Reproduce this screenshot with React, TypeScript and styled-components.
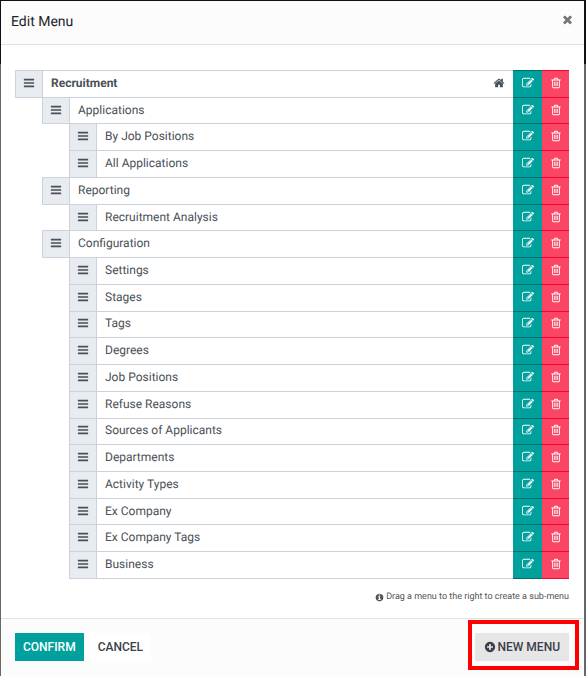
import React from "react";
import styled, { createGlobalStyle } from "styled-components";

const GlobalStyle = createGlobalStyle`
  *, *::before, *::after { box-sizing: border-box; }
  body {
    margin: 0;
    font-family: Roboto, "Liberation Sans", sans-serif;
    font-size: 12px;
    line-height: 16px;
    text-rendering: geometricPrecision;
    color: #495057;
    background: linear-gradient(#110f17 64px, #68686a 64px);
  }
  button { font: inherit; border-radius: 0; cursor: pointer; }
`;

const paths = {
  edit: "M888 1184l116-116-152-152-116 116v56h96v96h56zm440-720q-16-16-33 1l-350 350q-17 17-1 33t33-1l350-350q17-17 1-33zm80 594v190q0 119-84.5 203.5t-203.5 84.5h-832q-119 0-203.5-84.5t-84.5-203.5v-832q0-119 84.5-203.5t203.5-84.5h832q63 0 117 25 15 7 18 23 3 17-9 29l-49 49q-14 14-32 8-23-6-45-6h-832q-66 0-113 47t-47 113v832q0 66 47 113t113 47h832q66 0 113-47t47-113v-126q0-13 9-22l64-64q15-15 35-7t20 29zm-96-738l288 288-672 672h-288v-288zm444 132l-92 92-288-288 92-92q28-28 68-28t68 28l152 152q28 28 28 68t-28 68z",
  trash: "M704 736v576q0 14-9 23t-23 9h-64q-14 0-23-9t-9-23v-576q0-14 9-23t23-9h64q14 0 23 9t9 23zm256 0v576q0 14-9 23t-23 9h-64q-14 0-23-9t-9-23v-576q0-14 9-23t23-9h64q14 0 23 9t9 23zm256 0v576q0 14-9 23t-23 9h-64q-14 0-23-9t-9-23v-576q0-14 9-23t23-9h64q14 0 23 9t9 23zm128 724v-948h-896v948q0 22 7 40.5t14.5 27 10.5 8.5h832q3 0 10.5-8.5t14.5-27 7-40.5zm-672-1076h448l-48-117q-7-9-17-11h-317q-10 2-17 11zm928 32v64q0 14-9 23t-23 9h-96v948q0 83-47 143.5t-113 60.5h-832q-66 0-113-58.5t-47-141.5v-952h-96q-14 0-23-9t-9-23v-64q0-14 9-23t23-9h309l70-167q15-37 54-63t79-26h320q40 0 79 26t54 63l70 167h309q14 0 23 9t9 23z",
  home: "M1472 992v480q0 26-19 45t-45 19h-384v-384h-256v384h-384q-26 0-45-19t-19-45v-480q0-1 .5-3t.5-3l575-474 575 474q1 2 1 6zm223-69l-62 74q-8 9-21 11h-3q-13 0-21-7l-692-577-692 577q-12 8-24 7-13-2-21-11l-62-74q-8-10-7-23.5t11-21.5l719-599q32-26 76-26t76 26l244 204v-195q0-14 9-23t23-9h192q14 0 23 9t9 23v408l219 182q10 8 11 21.5t-7 23.5z",
  plus: "M1344 960v-128q0-26-19-45t-45-19h-256v-256q0-26-19-45t-45-19h-128q-26 0-45 19t-19 45v256h-256q-26 0-45 19t-19 45v128q0 26 19 45t45 19h256v256q0 26 19 45t45 19h128q26 0 45-19t19-45v-256h256q26 0 45-19t19-45zm320-64q0 209-103 385.5t-279.5 279.5-385.5 103-385.5-103-279.5-279.5-103-385.5 103-385.5 279.5-279.5 385.5-103 385.5 103 279.5 279.5 103 385.5z",
  info: "M1152 1376v-160q0-14-9-23t-23-9h-96v-512q0-14-9-23t-23-9h-320q-14 0-23 9t-9 23v160q0 14 9 23t23 9h96v320h-96q-14 0-23 9t-9 23v160q0 14 9 23t23 9h448q14 0 23-9t9-23zm-128-896v-160q0-14-9-23t-23-9h-192q-14 0-23 9t-9 23v160q0 14 9 23t23 9h192q14 0 23-9t9-23zm640 416q0 209-103 385.5t-279.5 279.5-385.5 103-385.5-103-279.5-279.5-103-385.5 103-385.5 279.5-279.5 385.5-103 385.5 103 279.5 279.5 103 385.5z",
  close: "M1490 1322q0 40-28 68l-136 136q-28 28-68 28t-68-28l-294-294-294 294q-28 28-68 28t-68-28l-136-136q-28-28-28-68t28-68l294-294-294-294q-28-28-28-68t28-68l136-136q28-28 68-28t68 28l294 294 294-294q28-28 68-28t68 28l136 136q28 28 28 68t-28 68l-294 294 294 294q28 28 28 68z",
  bars: "M1664 1344v128q0 26-19 45t-45 19h-1408q-26 0-45-19t-19-45v-128q0-26 19-45t45-19h1408q26 0 45 19t19 45zm0-512v128q0 26-19 45t-45 19h-1408q-26 0-45-19t-19-45v-128q0-26 19-45t45-19h1408q26 0 45 19t19 45zm0-512v128q0 26-19 45t-45 19h-1408q-26 0-45-19t-19-45v-128q0-26 19-45t45-19h1408q26 0 45 19t19 45z",
};

const Svg = styled.svg<{ $size: number }>`
  display: block;
  flex: none;
  width: ${(p) => p.$size}px;
  height: ${(p) => p.$size}px;
  fill: currentColor;
`;

function Icon({ name, size = 12 }: { name: keyof typeof paths; size?: number }) {
  return (
    <Svg $size={size} viewBox="0 0 1792 1792" aria-hidden="true">
      <path d={paths[name]} />
    </Svg>
  );
}

const Dialog = styled.section`
  display: flex;
  flex-direction: column;
  min-height: calc(100vh - 1px);
  margin: 1px 2px 0 1px;
  background: #fff;
`;

const Header = styled.header`
  display: flex;
  justify-content: space-between;
  align-items: flex-start;
  padding: 11px 10px 12px;
  background: #fcfcfc;
  border-bottom: 1px solid #dee2e6;
`;

const Title = styled.h1`
  margin: 0;
  font-size: 14px;
  line-height: 20px;
  font-weight: 400;
  color: #212529;
`;

const CloseButton = styled.button`
  padding: 1px 0;
  border: 0;
  background: none;
  color: #777;
`;

const Body = styled.main`
  flex: 1;
  display: flex;
  flex-direction: column;
  padding: 25px 15px 13px 14px;
`;

const MenuList = styled.ul`
  flex: 1;
  display: flex;
  flex-direction: column;
  margin: 0;
  padding: 1px 0 0;
  list-style: none;
`;

const MenuRow = styled.li<{ $level: number }>`
  flex: 1;
  display: flex;
  min-height: 24px;
  margin-top: -1px;
  margin-left: ${(p) => p.$level * 27}px;
`;

const Handle = styled.button`
  display: flex;
  align-items: center;
  justify-content: center;
  width: 28px;
  padding: 0 0 2px;
  border: 1px solid #ccd2dc;
  background: #e8ebf0;
  color: #495057;
  cursor: move;
`;

const MenuName = styled.div<{ $main: boolean }>`
  flex: 1;
  display: flex;
  align-items: center;
  justify-content: space-between;
  margin-left: -1px;
  padding: 0 8px 2px;
  border: 1px solid #ccd2dc;
  border-right: 0;
  font-weight: ${(p) => (p.$main ? 700 : 400)};
`;

const RowAction = styled.button<{ $danger?: boolean }>`
  display: flex;
  align-items: center;
  justify-content: center;
  width: ${(p) => (p.$danger ? 27 : 29)}px;
  padding: 0 0 2px;
  border: solid ${(p) => (p.$danger ? "#f5023b" : "#006d6b")};
  border-width: 1px 0;
  background: ${(p) => (p.$danger ? "#fa4664" : "#00a09d")};
  color: #fff;
`;

const Hint = styled.p`
  display: flex;
  align-items: center;
  justify-content: flex-end;
  gap: 2px;
  margin: 10px 0 0;
  font-size: 9px;
  color: #555;
`;

const Footer = styled.footer`
  display: flex;
  align-items: center;
  gap: 6px;
  padding: 14px 15px 15px 14px;
  background: #fcfcfc;
  border-top: 1px solid #dee2e6;
`;

const fills = {
  primary: ["#00a09d", "#fff"],
  plain: ["#fff", "#3b3f4a"],
  muted: ["#e6e6e6", "#3b3f4a"],
};

const Button = styled.button<{ $kind: keyof typeof fills }>`
  display: flex;
  align-items: center;
  gap: 2px;
  height: 28px;
  padding: 0 ${(p) => (p.$kind === "muted" ? 9 : 8)}px;
  border: 0;
  font-weight: 500;
  text-transform: uppercase;
  background: ${(p) => fills[p.$kind][0]};
  color: ${(p) => fills[p.$kind][1]};
`;

const Highlight = styled.div`
  position: relative;
  margin-left: auto;

  &::after {
    content: "";
    position: absolute;
    inset: -13px -10px -9px -7px;
    border: 4px solid #f00;
    pointer-events: none;
  }
`;

const menus: [string, number][] = [
  ["Recruitment", 0],
  ["Applications", 1],
  ["By Job Positions", 2],
  ["All Applications", 2],
  ["Reporting", 1],
  ["Recruitment Analysis", 2],
  ["Configuration", 1],
  ["Settings", 2],
  ["Stages", 2],
  ["Tags", 2],
  ["Degrees", 2],
  ["Job Positions", 2],
  ["Refuse Reasons", 2],
  ["Sources of Applicants", 2],
  ["Departments", 2],
  ["Activity Types", 2],
  ["Ex Company", 2],
  ["Ex Company Tags", 2],
  ["Business", 2],
];

export default function App() {
  return (
    <>
      <GlobalStyle />
      <Dialog role="dialog" aria-labelledby="dialog-title">
        <Header>
          <Title id="dialog-title">Edit Menu</Title>
          <CloseButton type="button" aria-label="Close">
            <Icon name="close" size={13} />
          </CloseButton>
        </Header>
        <Body>
          <MenuList>
            {menus.map(([name, level]) => (
              <MenuRow key={name} $level={level}>
                <Handle type="button" aria-label={`Move ${name}`}>
                  <Icon name="bars" />
                </Handle>
                <MenuName $main={level === 0}>
                  {name}
                  {level === 0 && <Icon name="home" />}
                </MenuName>
                <RowAction type="button" aria-label={`Edit ${name}`}>
                  <Icon name="edit" />
                </RowAction>
                <RowAction type="button" $danger aria-label={`Delete ${name}`}>
                  <Icon name="trash" />
                </RowAction>
              </MenuRow>
            ))}
          </MenuList>
          <Hint>
            <Icon name="info" size={9} />
            Drag a menu to the right to create a sub-menu
          </Hint>
        </Body>
        <Footer>
          <Button type="button" $kind="primary">Confirm</Button>
          <Button type="button" $kind="plain">Cancel</Button>
          <Highlight>
            <Button type="button" $kind="muted">
              <Icon name="plus" />
              New menu
            </Button>
          </Highlight>
        </Footer>
      </Dialog>
    </>
  );
}
